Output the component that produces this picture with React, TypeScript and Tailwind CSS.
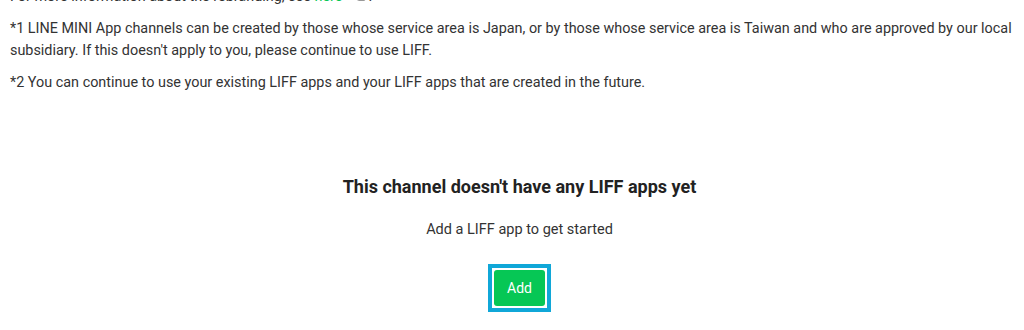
import { ExternalLink } from "lucide-react";

export default function App() {
  return (
    <div
      className="min-h-[330px] bg-white text-[#333] overflow-hidden"
      style={{ fontFamily: "Roboto, 'Liberation Sans', sans-serif" }}
    >
      <div className="pl-[10px] text-[14.4px] leading-[22px]">
        <p className="-mt-[14px]">
          For more information about the rebranding, see{" "}
          <a href="#" className="text-[#06c755]">
            here
          </a>
          <ExternalLink className="ml-[14px] inline-block h-[12px] w-[12px] text-[#999] align-[-1px]" />
          .
        </p>
        <p className="mt-[10px]">
          *1 LINE MINI App channels can be created by those whose service area is Japan, or by those
          whose service area is Taiwan and who are approved by our local subsidiary. If this doesn't
          apply to you, please continue to use LIFF.
        </p>
        <p className="mt-[10px]">
          *2 You can continue to use your existing LIFF apps and your LIFF apps that are created in
          the future.
        </p>
      </div>

      <div className="mt-[81px] flex flex-col items-center pl-[15px]">
        <h2 className="text-[18px] leading-[24px] font-bold text-[#222]">
          This channel doesn't have any LIFF apps yet
        </h2>
        <p className="mt-[20px] text-[14.5px] leading-[22px]">Add a LIFF app to get started</p>
        <div className="mt-[23px] border-[4px] border-[#10a7d8] p-[2px]">
          <button
            type="button"
            className="flex h-[36px] w-[51px] items-center justify-center rounded-[3px] bg-[#06c755] text-[14px] text-white"
          >
            Add
          </button>
        </div>
      </div>
    </div>
  );
}
